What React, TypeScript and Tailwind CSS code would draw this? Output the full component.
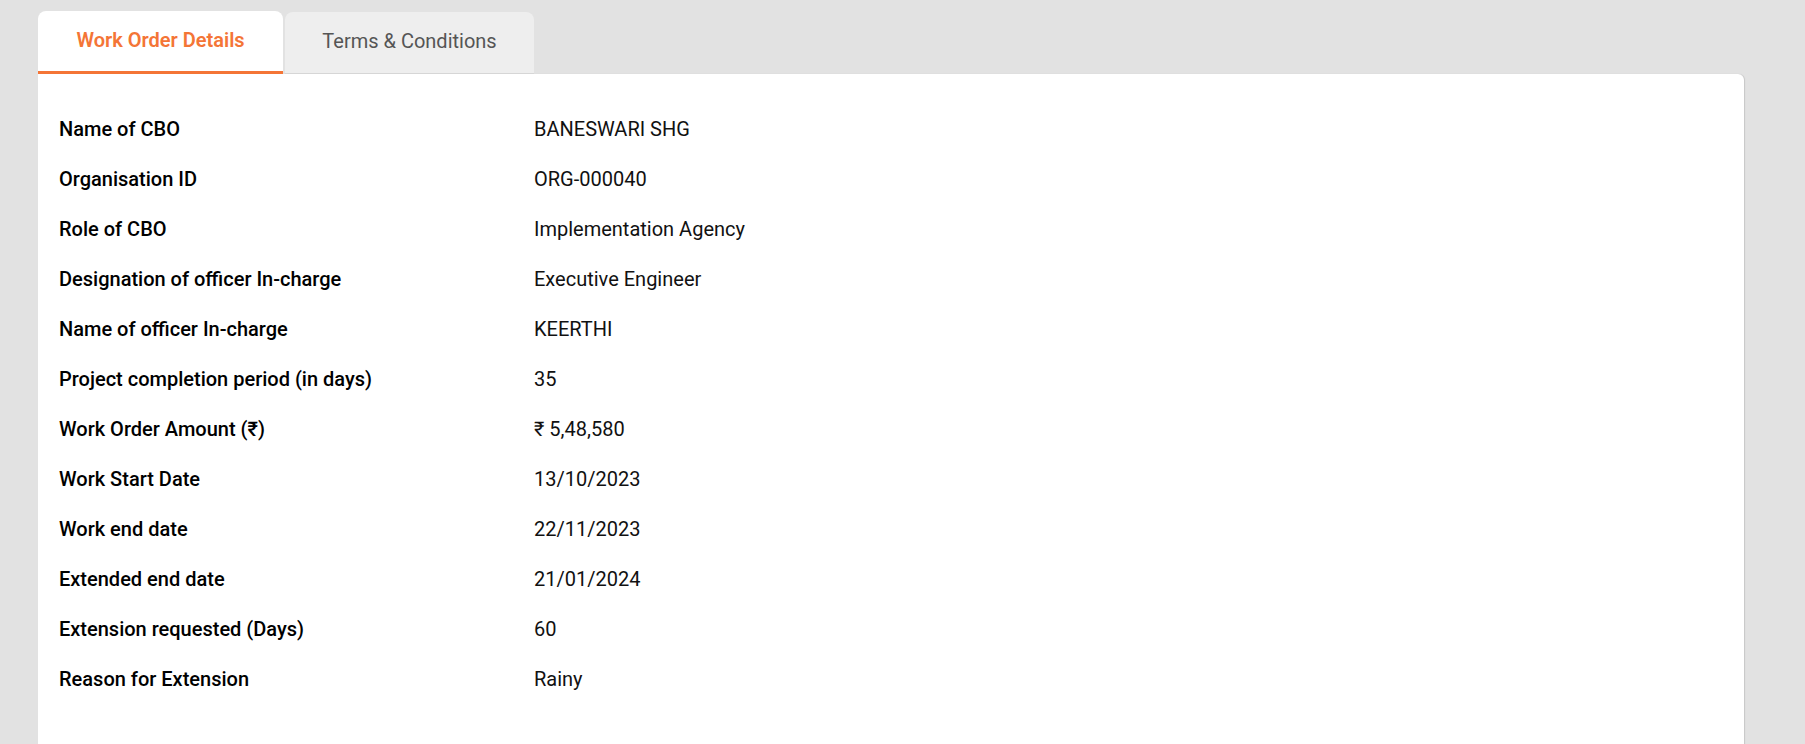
import React from "react";

const rows: [string, string][] = [
  ["Name of CBO", "BANESWARI SHG"],
  ["Organisation ID", "ORG-000040"],
  ["Role of CBO", "Implementation Agency"],
  ["Designation of officer In-charge", "Executive Engineer"],
  ["Name of officer In-charge", "KEERTHI"],
  ["Project completion period (in days)", "35"],
  ["Work Order Amount (₹)", "₹ 5,48,580"],
  ["Work Start Date", "13/10/2023"],
  ["Work end date", "22/11/2023"],
  ["Extended end date", "21/01/2024"],
  ["Extension requested (Days)", "60"],
  ["Reason for Extension", "Rainy"],
];

export default function App() {
  return (
    <div
      className="h-[744px] w-full overflow-hidden bg-[#e2e2e2] pl-[38px] pt-[11px]"
      style={{ fontFamily: "Roboto, 'Noto Sans', sans-serif" }}
    >
      <div className="flex items-end gap-[2px]">
        <div className="flex h-[63px] w-[245px] items-center justify-center rounded-t-[8px] border-b-[3px] border-[#f47536] bg-white pb-[2px] text-[20px] font-semibold text-[#f47536]">
          Work Order Details
        </div>
        <div className="flex h-[62px] w-[249px] items-center justify-center rounded-t-[8px] border-b border-[#d6d6d6] bg-[#eeeeee] pb-[4px] text-[20px] text-[#555555]">
          Terms &amp; Conditions
        </div>
      </div>
      <div className="w-[1706px] rounded-tr-[6px] bg-white pb-[80px] pl-[21px] pt-[30px] shadow-[1px_0_1px_rgba(0,0,0,0.12)]">
        {rows.map(([k, v]) => (
          <div key={k} className="grid h-[50px] grid-cols-[475px_1fr] items-center">
            <div className="text-[20px] font-medium text-[#000000]">{k}</div>
            <div className="text-[20px] text-[#111111]">{v}</div>
          </div>
        ))}
      </div>
    </div>
  );
}
